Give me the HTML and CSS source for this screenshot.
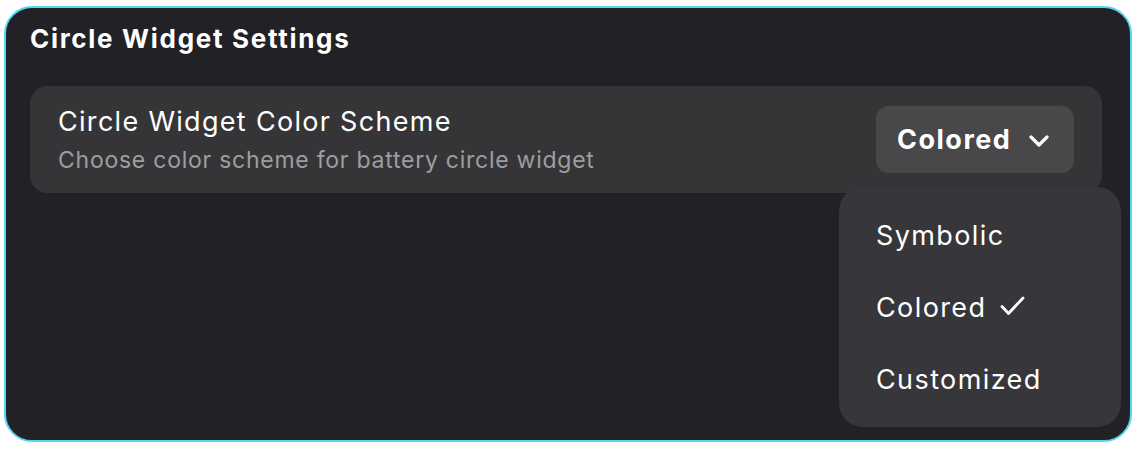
FILE: index.html
```html
<!DOCTYPE html>
<html>
<head>
<meta charset="utf-8">
<link rel="stylesheet" href="styles.css">
</head>
<body>
<div class="window">
  <h1 class="title">Circle Widget Settings</h1>
  <div class="row">
    <div class="row-text">
      <div class="row-title">Circle Widget Color Scheme</div>
      <div class="row-sub">Choose color scheme for battery circle widget</div>
    </div>
    <button class="dropdown">
      <span>Colored</span>
      <svg width="20" height="12" viewBox="0 0 20 12"><path d="M2 2 L10 10 L18 2" fill="none" stroke="#fff" stroke-width="3.2" stroke-linecap="round" stroke-linejoin="round"/></svg>
    </button>
  </div>
  <div class="menu">
    <div class="item">Symbolic</div>
    <div class="item">Colored <svg class="check" width="25" height="20" viewBox="0 0 25 20"><path d="M2 10.5 L8.5 17.5 L23 2" fill="none" stroke="#fff" stroke-width="2.8" stroke-linecap="round" stroke-linejoin="round"/></svg></div>
    <div class="item">Customized</div>
  </div>
</div>
</body>
</html>
```

FILE: styles.css
```css
html, body { margin: 0; padding: 0; background: #ffffff; }
body { font-family: Inter, "Noto Sans", sans-serif; }
.window {
  position: relative;
  margin: 6px 0 0 4px;
  width: 1128px;
  height: 436px;
  box-sizing: border-box;
  border: 2px solid #55d6ef;
  border-radius: 28px;
  background: #222226;
  padding: 16px 28px 0 24px;
  color: #ffffff;
}
.title {
  margin: 0;
  font-size: 26px;
  font-weight: 700;
  line-height: 30px;
  letter-spacing: 1.7px;
}
.row {
  margin-top: 32px;
  height: 107px;
  background: #353537;
  border-radius: 18px;
  display: flex;
  align-items: center;
  justify-content: space-between;
  padding: 0 28px;
  box-sizing: border-box;
}
.row-text { display: flex; flex-direction: column; gap: 8px; }
.row-title { font-size: 27px; line-height: 32px; letter-spacing: 1.3px; }
.row-sub { font-size: 23px; line-height: 28px; color: #9e9ea0; letter-spacing: 0.75px; }
.dropdown {
  border: 0;
  background: #48484b;
  border-radius: 13px;
  height: 67px;
  width: 198px;
  display: flex;
  align-items: center;
  gap: 18px;
  color: #fff;
  font-family: Inter, "Noto Sans", sans-serif;
  font-size: 27px;
  font-weight: 700;
  letter-spacing: 1.5px;
  padding: 0 0 0 21px;
}
.dropdown svg { margin-top: 2px; }
.menu {
  position: absolute;
  left: 833px;
  top: 179px;
  width: 282px;
  height: 240px;
  background: #37363b;
  border-radius: 24px;
  box-sizing: border-box;
  padding: 12px 0 0 37px;
}
.item {
  height: 72px;
  display: flex;
  align-items: center;
  gap: 14px;
  font-size: 27px;
  letter-spacing: 1.4px;
}
.check { margin-top: -2px; }
```
